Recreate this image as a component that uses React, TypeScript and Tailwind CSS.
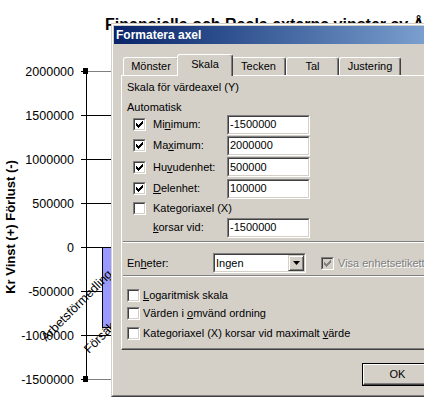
import clsx from 'clsx'
import type { ReactNode } from 'react'

const ticks = [2000000, 1500000, 1000000, 500000, 0, -500000, -1000000, -1500000]
const yOf = (v: number) => 247 - (v / 500000) * 44

function Chart() {
  return (
    <svg
      width="424"
      height="397"
      className="absolute inset-0"
      fontFamily="'Liberation Sans', Arial, sans-serif"
    >
      <text x="105" y="30" fontSize="16" fontWeight="bold">
        Finansiella och Reala externa vinster av Åtgärder
      </text>
      <text transform="translate(14.5 227) rotate(-90)" textAnchor="middle" fontSize="13" fontWeight="bold">
        Kr Vinst (+) Förlust (-)
      </text>
      {ticks.map((v) => {
        const y = yOf(v) + 0.5
        const edge = v === 2000000 || v === -1500000
        return (
          <g key={v}>
            <line x1="86" x2="424" y1={y} y2={y} stroke={edge ? '#808080' : '#000'} />
            <line x1="81" x2="87" y1={y} y2={y} stroke="#000" />
            <text x="74" y={yOf(v) + 4.5} textAnchor="end" fontSize="12.5">
              {v}
            </text>
          </g>
        )
      })}
      <line x1="86.5" x2="86.5" y1="71" y2="379" stroke="#000" />
      <rect x="102.5" y="247.5" width="30" height="80" fill="#9999ff" stroke="#000" />
      <rect x="83" y="68" width="5" height="6" fill="#000" />
      <rect x="83" y="376" width="5" height="6" fill="#000" />
      <text transform="translate(113 275) rotate(-45)" textAnchor="end" fontSize="12.5">
        Arbetsförmedling
      </text>
      <text transform="translate(89 354) rotate(-45)" fontSize="12.5">
        Försäkringskassan
      </text>
    </svg>
  )
}

function CheckMark({ color }: { color: string }) {
  const cols = [2, 3, 4, 3, 2, 1, 0]
  return (
    <svg width="7" height="7" viewBox="0 0 7 7" className="block" shapeRendering="crispEdges">
      {cols.map((y, x) => (
        <rect key={x} x={x} y={y} width="1" height="3" fill={color} />
      ))}
    </svg>
  )
}

function Checkbox({ checked = false, disabled = false }: { checked?: boolean; disabled?: boolean }) {
  return (
    <span className="flex h-[13px] w-[13px] shrink-0 border border-t-[#808080] border-l-[#808080] border-r-white border-b-white">
      <span
        className={clsx(
          'flex flex-1 items-center justify-center border border-t-[#404040] border-l-[#404040] border-r-[#d4d0c8] border-b-[#d4d0c8]',
          disabled ? 'bg-[#d4d0c8]' : 'bg-white'
        )}
      >
        {checked && <CheckMark color={disabled ? '#808080' : '#000'} />}
      </span>
    </span>
  )
}

function Field({ value }: { value: string }) {
  return (
    <div className="flex h-[20px] w-[83px] border border-t-[#808080] border-l-[#808080] border-r-white border-b-white">
      <div className="flex flex-1 items-center border border-t-[#404040] border-l-[#404040] border-r-[#d4d0c8] border-b-[#d4d0c8] bg-white pl-px">
        {value}
      </div>
    </div>
  )
}

function Separator() {
  return (
    <div className="mx-px">
      <div className="h-px bg-[#808080]" />
      <div className="h-px bg-white" />
    </div>
  )
}

function ScaleRow({ h, label, value }: { h: string; label: ReactNode; value: string }) {
  return (
    <div className={clsx('flex items-center pl-[11px]', h)}>
      <Checkbox checked />
      <span className="ml-[7px] w-[74px]">{label}</span>
      <Field value={value} />
    </div>
  )
}

const tabs = [
  { label: 'Mönster', w: 'w-[56px]' },
  { label: 'Skala', w: 'w-[56px]', active: true },
  { label: 'Tecken', w: 'w-[55px]' },
  { label: 'Tal', w: 'w-[53px]' },
  { label: 'Justering', w: 'w-[62px]' },
]

export default function App() {
  return (
    <div className="relative h-[397px] w-[424px] overflow-hidden bg-white font-['Liberation_Sans',Arial,sans-serif] text-[11px] leading-[13px] text-black">
      <Chart />

      <div className="absolute left-[111px] top-[23px] h-[374px] w-[420px] border border-t-[#d4d0c8] border-l-[#d4d0c8] border-r-[#404040] border-b-[#404040] bg-[#d4d0c8]">
        <div className="flex h-full flex-col border border-t-white border-l-white border-r-[#808080] border-b-[#808080] p-px">
          <div className="flex h-[18px] shrink-0 items-center bg-linear-to-r from-[#0a246a] to-[#a6caf0] pl-[2px] text-[12px] font-bold text-white">
            Formatera axel
          </div>

          <div className="px-[7px] pt-[10px]">
            <div className="flex h-[21px] items-end pl-[2px]">
              {tabs.map((t) =>
                t.active ? (
                  <div
                    key={t.label}
                    className={clsx(
                      'relative z-10 -mx-[2px] -mb-px flex h-[22px] items-center justify-center rounded-t-[3px] border-t border-l border-r border-t-white border-l-white border-r-[#404040] bg-[#d4d0c8] pb-[2px] shadow-[inset_-1px_0_0_#808080]',
                      t.w
                    )}
                  >
                    {t.label}
                  </div>
                ) : (
                  <div
                    key={t.label}
                    className={clsx(
                      'flex h-[18px] items-center justify-center rounded-t-[3px] border-t border-l border-r border-t-white border-l-white border-r-[#404040] shadow-[inset_-1px_0_0_#808080]',
                      t.w
                    )}
                  >
                    {t.label}
                  </div>
                )
              )}
            </div>

            <div className="flex h-[275px] flex-col border border-t-white border-l-white border-r-[#404040] border-b-[#404040] shadow-[inset_-1px_-1px_0_#808080]">
              <div className="mt-[3px] h-[16px] pl-[5px] leading-[16px]">Skala för värdeaxel (Y)</div>
              <div className="mt-[5px] h-[14px] pl-[5px] leading-[14px]">Automatisk</div>

              <ScaleRow h="h-[21px]" label={<>Mi<u>n</u>imum:</>} value="-1500000" />
              <ScaleRow h="h-[21px]" label={<>Ma<u>x</u>imum:</>} value="2000000" />
              <ScaleRow h="h-[22px]" label={<>Hu<u>v</u>udenhet:</>} value="500000" />
              <ScaleRow h="h-[21px]" label={<><u>D</u>elenhet:</>} value="100000" />
              <div className="flex h-[18px] items-center pl-[11px]">
                <Checkbox />
                <span className="ml-[7px]">Kategoriaxel (X)</span>
              </div>
              <div className="flex h-[21px] items-center pl-[31px]">
                <span className="w-[74px]">
                  <u>k</u>orsar vid:
                </span>
                <Field value="-1500000" />
              </div>

              <div className="mt-[3px]">
                <Separator />
              </div>

              <div className="mt-[10px] flex h-[20px] items-center pl-[5px]">
                <span className="w-[86px]">
                  En<u>h</u>eter:
                </span>
                <div className="flex h-[20px] w-[93px] border border-t-[#808080] border-l-[#808080] border-r-white border-b-white">
                  <div className="flex flex-1 items-center border border-t-[#404040] border-l-[#404040] border-r-[#d4d0c8] border-b-[#d4d0c8] bg-white">
                    <span className="flex-1 pl-px">Ingen</span>
                    <span className="flex h-[16px] w-[16px] items-center justify-center border border-t-[#d4d0c8] border-l-[#d4d0c8] border-r-[#404040] border-b-[#404040] bg-[#d4d0c8] shadow-[inset_1px_1px_0_#fff,inset_-1px_-1px_0_#808080]">
                      <svg width="7" height="4" viewBox="0 0 7 4" className="block">
                        <path d="M0 0H7L3.5 4Z" fill="#000" />
                      </svg>
                    </span>
                  </div>
                </div>
                <span className="ml-[15px]">
                  <Checkbox checked disabled />
                </span>
                <span className="ml-[4px] whitespace-nowrap text-[#808080] [text-shadow:1px_1px_0_#fff]">
                  Visa enhetsetikett i diagram
                </span>
              </div>

              <div className="mt-[2px]">
                <Separator />
              </div>

              <div className="flex flex-col pl-[5px]">
                <div className="mt-[12px] flex h-[13px] items-center">
                  <Checkbox />
                  <span className="ml-[3px]">
                    <u>L</u>ogaritmisk skala
                  </span>
                </div>
                <div className="mt-[5px] flex h-[13px] items-center">
                  <Checkbox />
                  <span className="ml-[3px]">
                    Värden i <u>o</u>mvänd ordning
                  </span>
                </div>
                <div className="mt-[7px] flex h-[13px] items-center">
                  <Checkbox />
                  <span className="ml-[3px]">
                    Kategoriaxel (X) korsar vid maximalt <u>v</u>ärde
                  </span>
                </div>
              </div>
            </div>

            <div className="mt-[13px] flex gap-[6px] pl-[241px]">
              <div className="flex h-[23px] w-[71px] border border-black">
                <div className="flex flex-1 items-center justify-center border border-t-white border-l-white border-r-[#404040] border-b-[#404040] shadow-[inset_-1px_-1px_0_#808080]">
                  OK
                </div>
              </div>
              <div className="flex h-[23px] w-[75px] items-center justify-center border border-t-white border-l-white border-r-[#404040] border-b-[#404040] shadow-[inset_-1px_-1px_0_#808080]">
                Avbryt
              </div>
            </div>
          </div>
        </div>
      </div>
    </div>
  )
}
